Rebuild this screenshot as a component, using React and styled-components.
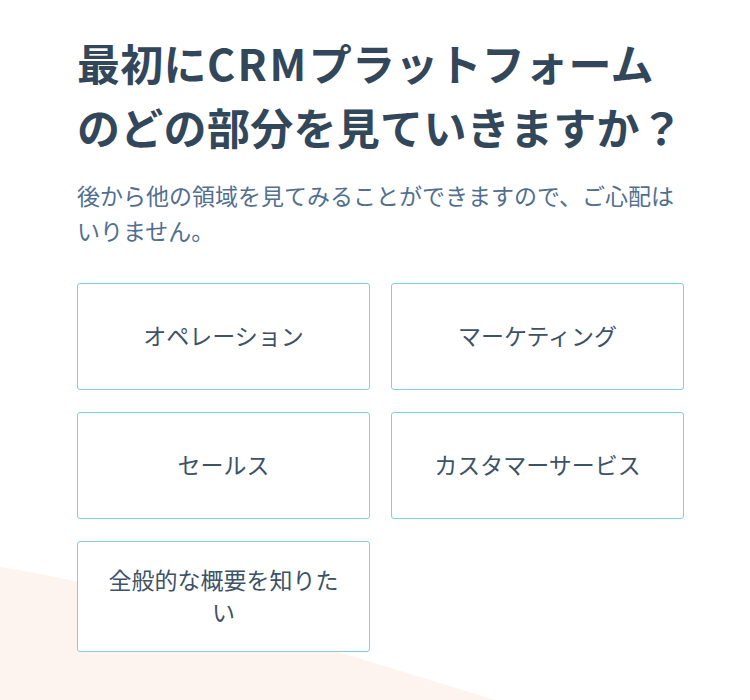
import styled, { createGlobalStyle } from "styled-components";

const GlobalStyle = createGlobalStyle`
    html, body {
        margin: 0;
        padding: 0;
        background: #ffffff;
    }
    * {
        box-sizing: border-box;
    }
`;

const Page = styled.div`
    position: relative;
    width: 750px;
    height: 700px;
    overflow: hidden;
    font-family: "Noto Sans CJK JP", "Noto Sans", sans-serif;
    color: #33475b;
`;

const Blob = styled.svg`
    position: absolute;
    left: 0;
    top: 0;
    width: 750px;
    height: 700px;
    z-index: 0;
`;

const Content = styled.div`
    position: relative;
    z-index: 1;
    width: 607px;
    margin-left: 77px;
    padding-top: 30px;
`;

const Title = styled.h1`
    margin: 0;
    font-size: 43px;
    font-weight: 700;
    line-height: 64px;
    color: #33475b;
    letter-spacing: 0.3px;
`;

const Latin = styled.span`
    letter-spacing: 2.5px;
`;

const Subtitle = styled.p`
    margin: 20px 0 0;
    font-size: 23px;
    font-weight: 400;
    line-height: 35px;
    color: #516f90;
`;

const Grid = styled.div`
    display: grid;
    grid-template-columns: 293px 293px;
    column-gap: 21px;
    row-gap: 22px;
    margin-top: 35px;
`;

const Choice = styled.button`
    display: flex;
    align-items: center;
    justify-content: center;
    min-height: 107px;
    padding: 21px 20px 24px;
    background: #ffffff;
    border: 1px solid #7fd1de;
    border-radius: 3px;
    font-family: inherit;
    font-size: 23px;
    font-weight: 400;
    line-height: 32px;
    color: #3d5266;
    text-align: center;
    cursor: pointer;
`;

const choices = [
    "オペレーション",
    "マーケティング",
    "セールス",
    "カスタマーサービス",
    "全般的な概要を知りたい",
];

const App = () => {
    return (
        <Page>
            <GlobalStyle />
            <Blob viewBox="0 0 750 700">
                <path d="M0 567 C 120 585, 300 640, 495 700 L 0 700 Z" fill="#fef4ef" />
            </Blob>
            <Content>
                <Title>
                    最初に<Latin>CRM</Latin>プラットフォーム
                    <br />
                    のどの部分を見ていきますか？
                </Title>
                <Subtitle>後から他の領域を見てみることができますので、ご心配はいりません。</Subtitle>
                <Grid>
                    {choices.map((c) => (
                        <Choice key={c}>{c}</Choice>
                    ))}
                </Grid>
            </Content>
        </Page>
    );
};

export default App;
